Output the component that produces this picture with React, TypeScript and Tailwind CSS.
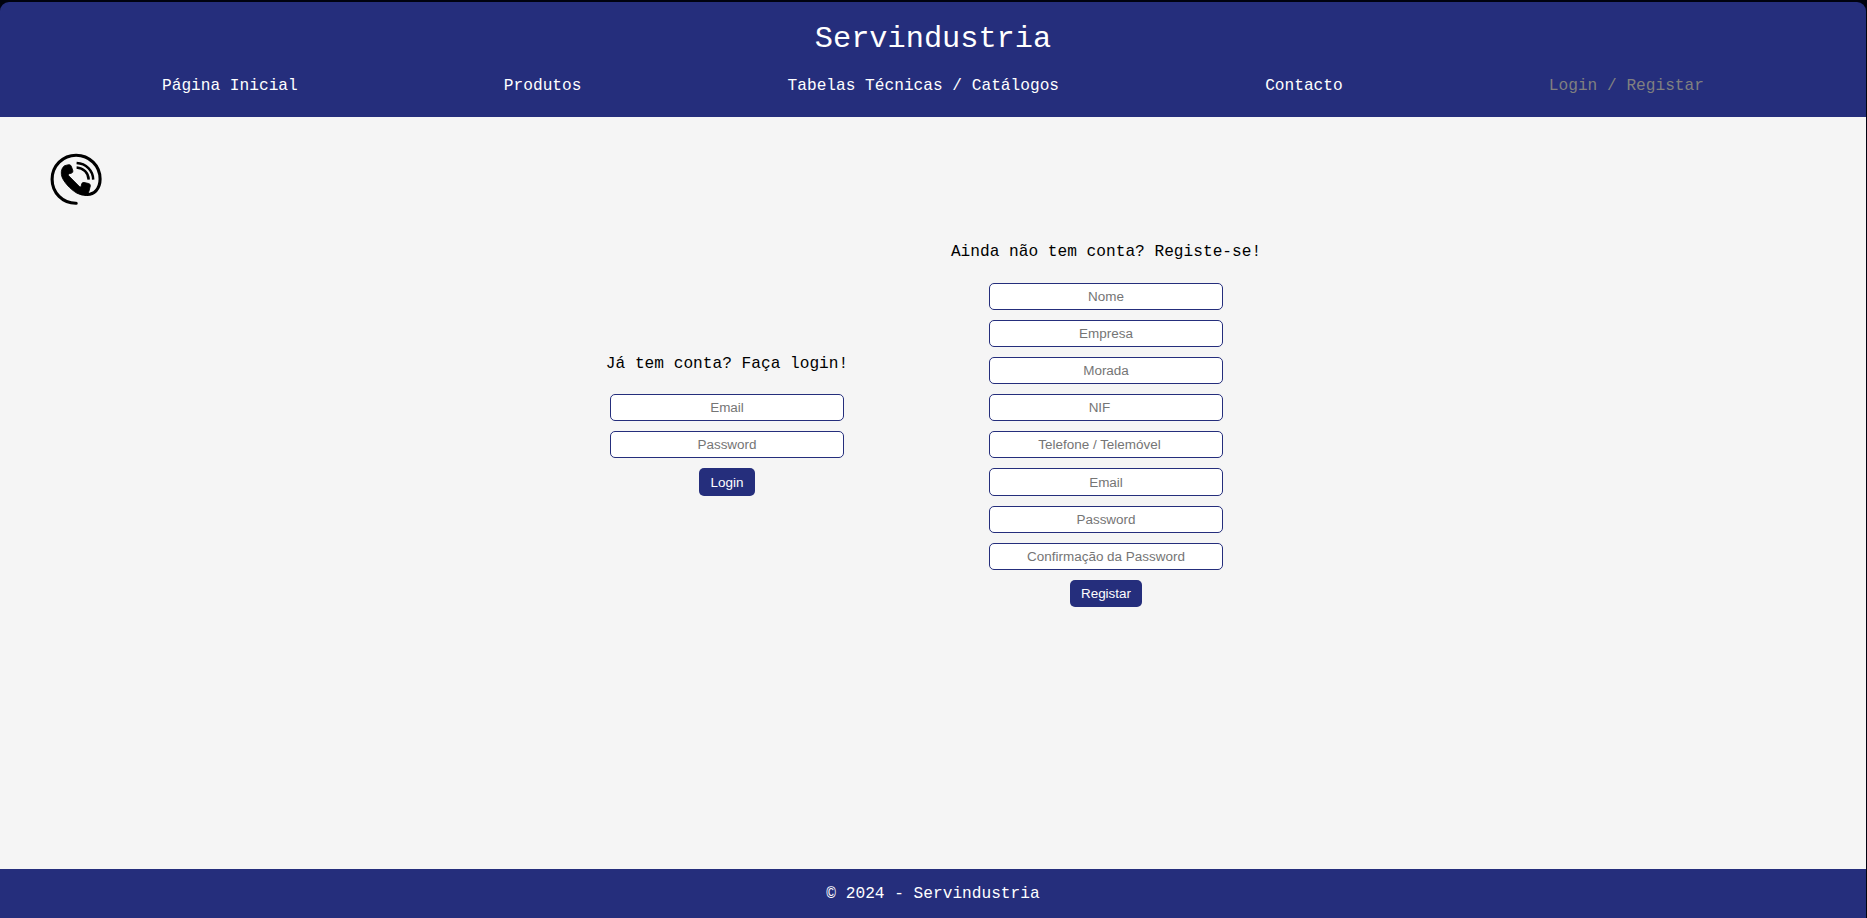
import React from "react";

type FieldSpec = { label: string; type?: string; size?: string };

const navItems = ["Página Inicial", "Produtos", "Tabelas Técnicas / Catálogos", "Contacto", "Login / Registar"];

const loginFields: FieldSpec[] = [{ label: "Email" }, { label: "Password", type: "password" }];

const registerFields: FieldSpec[] = [
  { label: "Nome" },
  { label: "Empresa" },
  { label: "Morada" },
  { label: "NIF", type: "number", size: "h-[27px] pl-[12px] pr-[10px]" },
  { label: "Telefone / Telemóvel", type: "number", size: "h-[27px] pl-[12px] pr-[10px]" },
  { label: "Email", size: "h-[28px] px-[10px]" },
  { label: "Password", type: "password" },
  { label: "Confirmação da Password", type: "password" },
];

function Field({ label, type = "text", size = "h-[27px] px-[10px]" }: FieldSpec) {
  return (
    <input
      type={type}
      placeholder={label}
      className={`${size} block w-[234px] shrink-0 rounded-[5px] border border-[#252e7c] bg-white text-center font-['Liberation_Sans',Arial,sans-serif] text-[13.4667px] text-black outline-none placeholder:text-[#757575] placeholder:opacity-100`}
    />
  );
}

type FormProps = {
  title: string;
  fields: FieldSpec[];
  action: string;
  formClass: string;
  titleClass: string;
  buttonClass: string;
};

function FormColumn({ title, fields, action, formClass, titleClass, buttonClass }: FormProps) {
  return (
    <form className={`${formClass} flex flex-col items-center gap-[10px]`} onSubmit={(e) => e.preventDefault()}>
      <p className={`${titleClass} h-[18px] leading-[18px] whitespace-nowrap text-black`}>{title}</p>
      {fields.map((f) => (
        <Field key={f.label} {...f} />
      ))}
      <button
        type="submit"
        className={`${buttonClass} rounded-[5px] bg-[#252e7c] font-['Liberation_Sans',Arial,sans-serif] text-[13.4667px] leading-[16px] text-white`}
      >
        {action}
      </button>
    </form>
  );
}

function PhoneIcon() {
  return (
    <svg viewBox="0 0 52 52" className="block h-[52px] w-[52px]" fill="none" stroke="#000">
      <path d="M26.2 50.2 C12.7 50.4 2.1 39.7 2.1 26.2 C2.1 12.8 12.9 2.2 26.1 2.2 C39.4 2.2 50.1 12.9 50.1 26 C50.1 36 43.8 42.4 35.5 41.3" strokeWidth="3.1" strokeLinecap="round" />
      <path d="M14.6 12.7 L18.6 11.7 Q20.6 11.4 21.3 13.3 L22.8 17.6 Q23.3 19.5 21.6 20.1 L19.2 20.7 Q17.9 21.4 18.6 22.7 L29.4 33.6 Q30.7 34.6 31.2 33.2 L31.7 30.9 Q32.2 29.2 34 29.5 L38.6 30.5 Q40.7 31 40.3 33 L39 38 Q38.4 40.6 36.2 42.4 Q31.6 42.6 27 40.2 C20.5 36.6 12 27.5 11.4 21.5 Q10.7 15.5 14.6 12.7 Z" fill="#000" stroke="#000" strokeWidth="0.9" />
      <path d="M26.6 10 C36.2 10.5 43 17.6 43.2 26.6" strokeWidth="2.5" />
      <path d="M26.6 14.5 C33.4 14.9 38.5 19.8 38.7 26.6" strokeWidth="2.5" />
    </svg>
  );
}

export default function App() {
  return (
    <div className="h-[918px] w-[1867px] overflow-hidden bg-[#00020f] pt-[2px] pr-px font-['Liberation_Mono','Courier_New',monospace] text-[16.16px]">
      <div className="flex h-[916px] flex-col overflow-hidden rounded-t-[9px] bg-[#252e7c]">
        <header className="flex h-[115px] shrink-0 flex-col pt-[19px] text-white">
          <h1 className="text-center text-[30.3px] leading-[36px]">Servindustria</h1>
          <nav className="mt-5 flex justify-between px-[162px] leading-[18px]">
            {navItems.map((item) => (
              <a key={item} className={item === "Login / Registar" ? "text-[#808080]" : "text-white"}>
                {item}
              </a>
            ))}
          </nav>
        </header>
        <main className="flex flex-1 flex-col bg-[#f5f5f5]">
          <div className="h-[126px] shrink-0 pt-9 pl-[50px]">
            <PhoneIcon />
          </div>
          <div className="flex items-start justify-center gap-[103px] pl-px">
            <FormColumn
              title="Já tem conta? Faça login!"
              fields={loginFields}
              action="Login"
              formClass="mt-[112px] w-[242px]"
              titleClass="mb-[11px]"
              buttonClass="h-[28px] w-[56px] pt-[2px]"
            />
            <FormColumn
              title="Ainda não tem conta? Registe-se!"
              fields={registerFields}
              action="Registar"
              formClass="w-[310px]"
              titleClass="mb-[12px]"
              buttonClass="h-[27px] w-[72px] pt-px"
            />
          </div>
        </main>
        <footer className="flex h-[49px] shrink-0 items-center justify-center pt-[2px] text-white">
          <p>© 2024 - Servindustria</p>
        </footer>
      </div>
    </div>
  );
}
